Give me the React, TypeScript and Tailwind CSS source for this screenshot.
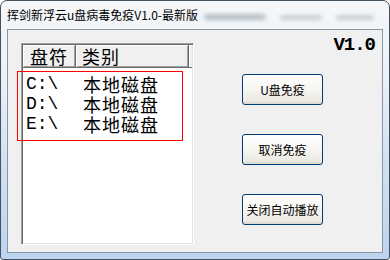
const cjk = { fontFamily: "'Noto Sans CJK SC', sans-serif" };
const mono = { fontFamily: "'Liberation Mono', 'Courier New', monospace" };

function Btn({ label }: { label: string }) {
  return (
    <div
      className="w-[81px] h-[31px] rounded-[3px] border border-[#003c74] bg-[linear-gradient(to_bottom,#ffffff_0%,#f6f5f1_50%,#ebe9e2_90%,#d9d6cc_100%)] flex items-center justify-center text-[12px] leading-none text-black"
      style={cjk}
    >
      {label}
    </div>
  );
}

const rows = ["C:\\", "D:\\", "E:\\"];

export default function App() {
  return (
    <div className="w-[390px] h-[260px] bg-white">
      <div className="w-[390px] h-[260px] rounded-t-[7px] rounded-b-[3px] border border-[#44525f] bg-[linear-gradient(to_bottom,#f5f7f9_0%,#eff3f7_25%,#d3e2f2_60%,#bcd4ee_100%)] flex flex-col overflow-hidden">
        <div className="h-[28px] flex items-center pl-[6px]">
          <span className="text-[12px] leading-none text-black whitespace-nowrap" style={cjk}>
            挥剑新浮云u盘病毒免疫V1.0-最新版
          </span>
          <div className="flex items-center mt-[4px]">
            <div className="ml-[6px] w-[62px] h-[6px] rounded-full bg-[#8e99a5] blur-[2px] opacity-60" />
            <div className="ml-[14px] w-[42px] h-[5px] rounded-full bg-[#9ea8b2] blur-[2px] opacity-50" />
            <div className="ml-[14px] w-[38px] h-[5px] rounded-full bg-[#9ea8b2] blur-[2px] opacity-50" />
          </div>
        </div>
        <div className="mx-[6px] mb-[6px] flex-1 border border-[#8795a4] bg-[#f0f0f0] relative flex items-start">
          {/* listbox */}
          <div className="ml-[13px] mt-[13px] w-[173px] h-[202px] bg-white border border-t-[#a0a0a0] border-l-[#a0a0a0] border-b-white border-r-white shadow-[inset_1px_1px_0_#696969,inset_-1px_-1px_0_#e3e3e3] p-[1px] flex flex-col">
            <div className="flex h-[23px] shrink-0">
              <div className="w-[53px] h-full bg-[#f0f0f0] border-r border-b border-[#696969] shadow-[inset_1px_1px_0_#fff,inset_-1px_-1px_0_#a0a0a0] pl-[7px] flex items-center text-[18px] tracking-[1px] leading-[20px] text-black" style={cjk}>
                盘符
              </div>
              <div className="w-[113px] h-full bg-[#f0f0f0] border-r border-b border-[#696969] shadow-[inset_1px_1px_0_#fff,inset_-1px_-1px_0_#a0a0a0] pl-[6px] flex items-center text-[18px] tracking-[1px] leading-[20px] text-black" style={cjk}>
                类别
              </div>
              <div className="flex-1 h-full bg-[#f0f0f0] border-b border-[#696969] shadow-[inset_1px_1px_0_#fff]" />
            </div>
            <div className="flex flex-col pt-[6px]">
              {rows.map((r) => (
                <div key={r} className="h-[20px] flex items-center text-black">
                  <span className="w-[60px] pl-[3px] text-[18px] leading-[20px]" style={mono}>
                    {r}
                  </span>
                  <span className="text-[18px] tracking-[1px] leading-[20px]" style={cjk}>
                    本地磁盘
                  </span>
                </div>
              ))}
            </div>
          </div>
          {/* right column */}
          <div className="flex-1 flex flex-col">
            <div className="h-[44px] pt-[5px] pr-[7px] flex justify-end">
              <span className="text-[19px] leading-[20px] font-bold tracking-[-1px] text-black" style={mono}>
                V1.0
              </span>
            </div>
            <div className="ml-[48px] flex flex-col gap-[29px]">
              <Btn label="U盘免疫" />
              <Btn label="取消免疫" />
              <Btn label="关闭自动播放" />
            </div>
          </div>
          {/* red annotation */}
          <div className="absolute left-[9px] top-[41px] w-[166px] h-[70px] border border-[#ff0000]" />
        </div>
      </div>
    </div>
  );
}
